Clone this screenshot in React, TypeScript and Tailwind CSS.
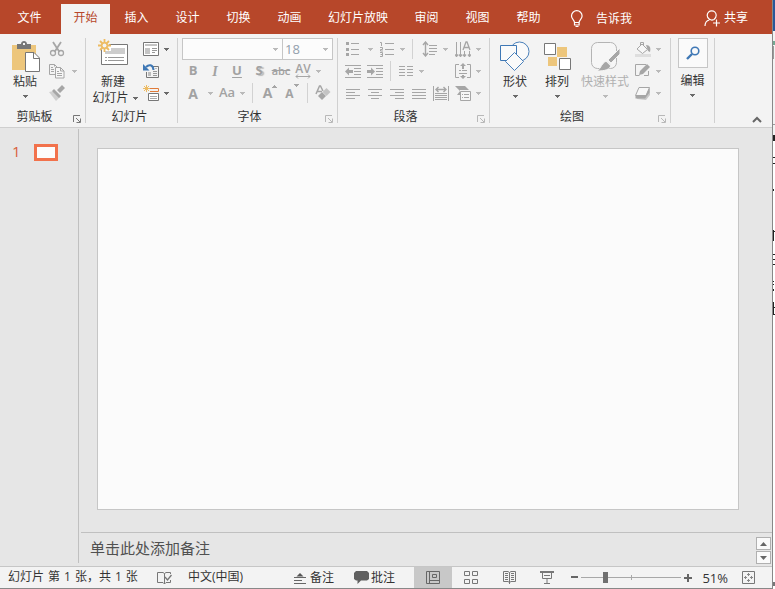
import type { ReactNode } from 'react';

const G = '#a6a6a6';
const D = '#777777';

type IconProps = { w?: number; h?: number; children: ReactNode };

const Icon = ({ w = 16, h = 16, children }: IconProps) => (
    <svg width={w} height={h} viewBox={`0 0 ${w} ${h}`} fill="none" className="block shrink-0" aria-hidden="true">
        {children}
    </svg>
);

// horizontal / vertical strokes, each path starts on a half pixel
const Lines = ({ d, c = G }: { d: string; c?: string }) => <path d={d} stroke={c} />;

const Arrow = ({ dark = false }: { dark?: boolean }) => (
    <svg width="5" height="3" viewBox="0 0 5 3" className="block shrink-0" aria-hidden="true">
        <path d="M0 0h5v1H4v1H3v1H2V2H1V1H0z" fill={dark ? '#6a6a6a' : '#bababa'} />
    </svg>
);

const Tool = ({ label, children }: { label: string; children: ReactNode }) => (
    <button type="button" aria-label={label} className="flex h-[22px] w-[22px] shrink-0 items-center justify-center text-[#a2a2a2]">
        {children}
    </button>
);

const More = ({ label, wide = false, dark = false }: { label: string; wide?: boolean; dark?: boolean }) => (
    <button type="button" aria-label={label} className={`flex h-[22px] shrink-0 items-center justify-center ${wide ? 'w-3' : 'w-2'}`}>
        <Arrow dark={dark} />
    </button>
);

const Sep = () => <span className="h-5 w-px shrink-0 bg-[#d2d2d2]" />;

const Row = ({ children }: { children: ReactNode }) => <div className="flex h-[22px] items-center">{children}</div>;

type GroupProps = { title: string; className: string; launcher?: 'dark' | 'light'; children: ReactNode };

const Group = ({ title, className, launcher, children }: GroupProps) => (
    <section aria-label={title} className={`flex h-[85px] shrink-0 flex-col border-r border-[#d0d0d0] ${className}`}>
        <div className="flex flex-1">{children}</div>
        <div className="flex h-4 items-end">
            <h2 className="flex-1 pr-1 text-center leading-3">{title}</h2>
            {launcher && (
                <button type="button" aria-label={`${title}设置`} className="mr-1 w-2">
                    <Icon w={8} h={8}>
                        <path d="M.5 7V.5H7M3 3l4 4M7.500 3.500v4h-4" stroke={launcher === 'dark' ? D : '#b8b8b8'} />
                    </Icon>
                </button>
            )}
        </div>
    </section>
);

type BigProps = { icon: ReactNode; label: string; className: string; off?: boolean };

const BigButton = ({ icon, label, className, off = false }: BigProps) => (
    <button type="button" className={`flex shrink-0 flex-col items-center ${off ? 'text-[#b0b0b0]' : ''} ${className}`}>
        <span className="flex h-9 items-center">{icon}</span>
        <span className="leading-4">{label}</span>
        <span className="pt-[5px]">
            <Arrow dark={!off} />
        </span>
    </button>
);

const tabs = ['插入', '设计', '切换', '动画', '幻灯片放映', '审阅', '视图', '帮助'];

const TabBar = () => (
    <header className="flex h-[34px] shrink-0 items-stretch bg-[#b7472a] pt-1 text-white">
        <nav className="flex gap-0.5" aria-label="功能区">
            <button type="button" className="w-[59px] pb-0.5">文件</button>
            <button type="button" className="w-[49px] bg-[#f3f3f3] pb-0.5 text-[#b7472a]" aria-current="page">开始</button>
            {tabs.map((t) => (
                <button type="button" key={t} className="min-w-[49px] px-3 pb-0.5">{t}</button>
            ))}
        </nav>
        <button type="button" className="ml-[17px] flex items-center gap-3">
            <Icon w={14} h={18}>
                <path d="M4.500 12.500c0-2.500-3-3.500-3-6.500a5.300 5.300 0 0 1 10.600 0c0 3-3 4-3 6.500zM4.500 12.500v2.500h4.600v-2.500M5.500 16.500h3" stroke="#fff" strokeWidth="1.200" />
            </Icon>
            告诉我
        </button>
        <button type="button" className="ml-auto mr-6 flex items-center gap-1 pb-0.5">
            <Icon w={16} h={17}>
                <path d="M1 16c0-3 1.500-5.300 4.300-6M10 9.500c-3 1.500-6.800-.5-6.800-4.200a4.500 4.500 0 0 1 9 0c0 2-.9 3.300-2.200 4.200M12.500 9.500v7M9 13h7" stroke="#fff" strokeWidth="1.200" />
            </Icon>
            共享
        </button>
    </header>
);

const Clipboard = () => (
    <Group title="剪贴板" launcher="dark" className="w-[86px]">
        <BigButton
            className="ml-1 w-[42px]"
            label="粘贴"
            icon={
                <Icon w={29} h={31}>
                    <path d="M1 4h24v25H1z" fill="#edc67c" />
                    <path d="M6 3h4c0-4 6-4 6 0h4v5H6z" fill={D} />
                    <path d="M12 2h2v2h-2z" fill="#f3f3f3" />
                    <path d="M14.500 11.500h8.500l5.500 5.500v13.500h-14z" fill="#fff" stroke={D} />
                    <path d="M22.500 11.500v6h6" stroke={D} />
                </Icon>
            }
        />
        <div className="flex flex-col">
            <Row>
                <Tool label="剪切">
                    <Icon>
                        <path d="M4 1l6.500 10M12 1L5.500 11" stroke={G} strokeWidth="1.800" />
                        <circle cx="4" cy="12" r="2.500" stroke={G} strokeWidth="1.300" />
                        <circle cx="12" cy="12" r="2.500" stroke={G} strokeWidth="1.300" />
                    </Icon>
                </Tool>
            </Row>
            <Row>
                <Tool label="复制">
                    <Icon>
                        <path d="M6 11.500H.5v-10h5l3 3M5.500 1.500v2M2 4.500h2M2 6.500h3M2 8.500h3" stroke={G} />
                        <path d="M6.500 4.500h5l3.500 3.500v7H6.500zM11.500 4.500V8H15M8 8.500h2M8 10.500h5M8 12.500h5" fill="#f7f7f7" stroke={G} />
                    </Icon>
                </Tool>
                <More label="复制选项" wide />
            </Row>
            <Row>
                <Tool label="格式刷">
                    <Icon>
                        <path d="M0 7l5-1 6 6-4 4z" fill="#d0d0d0" />
                        <path d="M5 4l7 7-2 2-7-7zM8 5l5-5 3 3-5 5z" fill={G} />
                    </Icon>
                </Tool>
            </Row>
        </div>
    </Group>
);

const Slides = () => (
    <Group title="幻灯片" className="w-[92px]">
        <button type="button" className="ml-1 flex w-[46px] shrink-0 flex-col items-center">
            <span className="flex h-9 items-center pb-2">
                <Icon w={32} h={29}>
                    <path d="M4.500 6.500h26v20h-26z" fill="#fff" stroke={D} />
                    <path d="M14 10h14v6H8v-3h6z" fill="#cdcdcd" />
                    <path d="M8 19.500h2M11 19.500h16M8 22.500h2M11 22.500h16" stroke="#999" />
                    <circle cx="7.500" cy="7.500" r="5" fill="#f3f3f3" />
                    <path d="M7.500 1v4M7.500 10v4M1 7.500h4M10 7.500h4M3 3l3 3M9 9l3 3M12 3L9 6M6 9l-3 3" stroke="#edbb62" strokeWidth="1.800" />
                    <circle cx="7.500" cy="7.500" r="2.800" stroke="#edbb62" strokeWidth="1.500" />
                </Icon>
            </span>
            <span className="leading-4">新建</span>
            <span className="flex items-center gap-1 pl-1 leading-4 whitespace-nowrap">
                幻灯片
                <Arrow dark />
            </span>
        </button>
        <div className="flex flex-col pl-1">
            <Row>
                <Tool label="版式">
                    <Icon>
                        <path d="M.5 1.500h15v13H.5z" fill="#fff" stroke={D} />
                        <path d="M2 3h12v2H2zM2 7h5v6H2z" fill="#c4c4c4" />
                        <path d="M9 7.500h5M9 9.500h5M9 11.500h3" stroke="#999" />
                    </Icon>
                </Tool>
                <More label="版式选项" dark />
            </Row>
            <Row>
                <Tool label="重置">
                    <Icon>
                        <path d="M10 3.500h5.500v11h-12V9" stroke={D} />
                        <path d="M5 9h3v4H5zM12 5h2v1h-2z" fill="#bdbdbd" />
                        <path d="M10 8.500h4M10 10.500h4M10 12.500h4" stroke="#999" />
                        <path d="M3 4c3-3 7-2.500 7.500 3" stroke="#3f78b5" strokeWidth="2" />
                        <path d="M0 1v6.500h6.500z" fill="#3f78b5" />
                    </Icon>
                </Tool>
            </Row>
            <Row>
                <Tool label="节">
                    <Icon>
                        <path d="M7 3.500h8.500v3H7" stroke="#e07b39" />
                        <path d="M5.500 8.500h10v7h-10z" fill="#fff" stroke={D} />
                        <path d="M7 11.500h7M7 13.500h7" stroke="#aaa" />
                        <path d="M3.500 0v7M0 3.500h7M1 1l5 5M6 1L1 6" stroke="#edbb62" />
                    </Icon>
                </Tool>
                <More label="节选项" dark />
            </Row>
        </div>
    </Group>
);

const FontGroup = () => (
    <Group title="字体" launcher="light" className="w-[160px]">
        <div className="ml-1 flex flex-col">
            <Row>
                <div className="grid h-[22px] w-[151px] grid-cols-[101px_50px]">
                    <label className="grid items-center border border-[#c6c6c6] bg-[#fcfcfc]">
                        <select aria-label="字体名称" className="col-start-1 row-start-1 h-full w-full appearance-none bg-transparent pl-1 outline-none">
                            <option></option>
                        </select>
                        <span className="pointer-events-none col-start-1 row-start-1 justify-self-end pr-1"><Arrow /></span>
                    </label>
                    <label className="grid items-center border border-l-0 border-[#c6c6c6] bg-[#fcfcfc]">
                        <select aria-label="字号" className="col-start-1 row-start-1 h-full w-full appearance-none bg-transparent pl-0.5 text-[13px] leading-5 text-[#93a0ad] outline-none">
                            <option>18</option>
                        </select>
                        <span className="pointer-events-none col-start-1 row-start-1 justify-self-end pr-1"><Arrow /></span>
                    </label>
                </div>
            </Row>
            <Row>
                <Tool label="加粗"><span className="text-[13px] font-bold">B</span></Tool>
                <Tool label="倾斜"><span className="font-['Liberation_Serif'] text-[14px] font-bold italic">I</span></Tool>
                <Tool label="下划线"><span className="text-[13px] font-bold underline underline-offset-2">U</span></Tool>
                <Tool label="文字阴影"><span className="text-[13px] font-bold [text-shadow:2px_1px_1px_#bbb]">S</span></Tool>
                <Tool label="删除线"><span className="text-[11px] font-semibold line-through">abc</span></Tool>
                <Tool label="字符间距">
                    <span className="flex flex-col items-center">
                        <span className="text-[12px] leading-[10px] font-semibold">AV</span>
                        <Icon w={16} h={5}><path d="M1 2.500h14M3 .5l-2 2 2 2M13 .5l2 2-2 2" stroke={G} /></Icon>
                    </span>
                </Tool>
                <More label="字符间距选项" />
            </Row>
            <Row>
                <Tool label="字体颜色"><span className="text-[14px] font-bold">A</span></Tool>
                <More label="颜色选项" wide />
                <Tool label="更改大小写"><span className="text-[13px] font-semibold">Aa</span></Tool>
                <More label="大小写选项" />
                <span className="flex px-1.5"><Sep /></span>
                <Tool label="增大字号">
                    <span className="flex">
                        <span className="text-[14px] leading-5 font-bold">A</span>
                        <Icon w={5} h={5}><path d="M2 2h1v1h1v1h1v1H0V4h1V3h1z" fill={G} /></Icon>
                    </span>
                </Tool>
                <Tool label="减小字号">
                    <span className="flex">
                        <span className="pt-0.5 text-[12px] leading-5 font-bold">A</span>
                        <Icon w={5} h={5}><path d="M0 2h5v1H4v1H3v1H2V4H1V3H0z" fill={G} /></Icon>
                    </span>
                </Tool>
                <span className="flex px-1"><Sep /></span>
                <Tool label="清除格式">
                    <Icon>
                        <path d="M1 9L4.500 1h1L8 6M2.500 6.500H7" stroke={G} strokeWidth="1.500" />
                        <path d="M3 11l4-4 4 4-4 4z" fill={G} />
                        <path d="M7.500 7l4-4 4 4-4 4z" fill="#c4c4c4" />
                    </Icon>
                </Tool>
            </Row>
        </div>
    </Group>
);

const Paragraph = () => (
    <Group title="段落" launcher="light" className="w-[152px]">
        <div className="ml-1 flex flex-col">
            <Row>
                <Tool label="项目符号">
                    <Icon>
                        <path d="M1 1h3v3H1zM1 7h3v3H1zM1 12h3v3H1z" fill={G} />
                        <Lines d="M6 2.500h8M6 8.500h8M6 13.500h8" />
                    </Icon>
                </Tool>
                <More label="项目符号选项" wide />
                <Tool label="编号">
                    <Icon>
                        <path d="M1 1.500h1.500V5M1 6.500h2.500v2H1.500v1.500H4M1 11.500h2.500v4H1M1.500 13.500h2" stroke={G} />
                        <Lines d="M6 2.500h9M6 8.500h9M6 13.500h9" />
                    </Icon>
                </Tool>
                <More label="编号选项" />
                <span className="flex px-1.5"><Sep /></span>
                <Tool label="行距">
                    <Icon>
                        <path d="M3.500 1v14M1 4l2.500-3L6 4M1 12l2.500 3L6 12" stroke={G} strokeWidth="1.400" />
                        <Lines d="M7 4.500h8M7 7.500h8M7 10.500h8M7 13.500h6" />
                    </Icon>
                </Tool>
                <More label="行距选项" />
                <span className="w-[3px]" />
                <Tool label="文字方向">
                    <Icon>
                        <Lines d="M1.500 1v15M5.500 1v15M9.500 10v6M14.500 10v6" />
                        <path d="M8 9l3-8h1l3 8M9 6.500h5M0 13.500l1.500 2 1.500-2M4 13.500l1.500 2 1.500-2M8 13.500l1.500 2 1.500-2M13 13.500l1.500 2 1.500-2" stroke={G} strokeWidth="1.300" />
                    </Icon>
                </Tool>
                <More label="文字方向选项" />
            </Row>
            <Row>
                <Tool label="减少缩进">
                    <Icon>
                        <Lines d="M0 2.500h16M9 5.500h7M9 8.500h7M9 11.500h7M0 14.500h16" />
                        <path d="M0 8.500l4-4V7h4v3H4v2.500z" fill={G} />
                    </Icon>
                </Tool>
                <Tool label="增加缩进">
                    <Icon>
                        <Lines d="M0 2.500h16M9 5.500h7M9 8.500h7M9 11.500h7M0 14.500h16" />
                        <path d="M8 8.500l-4-4V7H0v3h4v2.500z" fill={G} />
                    </Icon>
                </Tool>
                <span className="flex px-1"><Sep /></span>
                <Tool label="分栏">
                    <Icon>
                        <Lines d="M1 3.500h6M1 6.500h6M1 9.500h6M1 12.500h6M9 3.500h6M9 6.500h6M9 9.500h6M9 12.500h6" />
                    </Icon>
                </Tool>
                <More label="分栏选项" />
                <span className="w-[27px]" />
                <Tool label="对齐文本">
                    <Icon>
                        <Lines d="M4 1.500H.5v13H4M12 1.500h3.500v13H12M4 7.500h2M7 7.500h5M4 10.500h8" />
                        <path d="M8 0l3 3H9v3H7V3H5zM8 16l3-3H9v-1H7v1H5z" fill={G} />
                    </Icon>
                </Tool>
                <More label="对齐文本选项" />
            </Row>
            <Row>
                <Tool label="左对齐"><Icon><Lines d="M1 4.500h14M1 7.500h9M1 10.500h14M1 13.500h9" /></Icon></Tool>
                <Tool label="居中"><Icon><Lines d="M1 4.500h14M4 7.500h8M1 10.500h14M4 13.500h8" /></Icon></Tool>
                <Tool label="右对齐"><Icon><Lines d="M1 4.500h14M6 7.500h9M1 10.500h14M6 13.500h9" /></Icon></Tool>
                <Tool label="两端对齐"><Icon><Lines d="M1 4.500h14M1 7.500h14M1 10.500h14M1 13.500h14" /></Icon></Tool>
                <Tool label="分散对齐">
                    <Icon>
                        <Lines d="M.5 1v15M15.500 1v15M2 8.500h12M2 10.500h12M2 12.500h12M2 14.500h12" />
                        <path d="M3 4.500h10M5.500 2L3 4.500 5.500 7M10.500 2L13 4.500 10.500 7" stroke={G} strokeWidth="1.400" />
                    </Icon>
                </Tool>
                <Tool label="转换为 SmartArt">
                    <Icon>
                        <path d="M0 1h10l4 4H5v5H2l3-4z" fill={G} />
                        <path d="M5.500 6.500h10v9h-10z" fill="#f7f7f7" stroke={G} />
                        <Lines d="M7 9.500h1M9 9.500h5M7 12.500h1M9 12.500h5" />
                    </Icon>
                </Tool>
                <More label="SmartArt 选项" />
            </Row>
        </div>
    </Group>
);

const Drawing = () => (
    <Group title="绘图" launcher="light" className="w-[181px]">
        <BigButton
            className="ml-1 w-[42px]"
            label="形状"
            icon={
                <Icon w={30} h={30}>
                    <circle cx="19.500" cy="10.500" r="9.500" fill="#fafafa" stroke="#4a80ba" />
                    <path d="M.5 4.500h16v15H.5z" fill="#fafafa" stroke="#3f78b5" />
                    <path d="M14.500 11.500l9 9-9 9-9-9z" fill="#fafafa" stroke="#4a80ba" />
                </Icon>
            }
        />
        <BigButton
            className="w-[42px]"
            label="排列"
            icon={
                <Icon w={27} h={27}>
                    <path d="M13 4h10v10h-10v9H4V14h9z" fill="#edc67c" />
                    <path d="M.5.500h11v11H.5zM15.500 15.500h11v11h-11z" fill="#fff" stroke={D} />
                </Icon>
            }
        />
        <BigButton
            className="w-[54px]"
            label="快速样式"
            off
            icon={
                <Icon w={30} h={30}>
                    <rect x="1.500" y="1.500" width="25" height="26" rx="6" fill="#f6f6f6" stroke="#b4b4b4" />
                    <path d="M30 7v6l-9 9-3-3zM18 20l3 3c0 6-7 7-14 7 4-2 5-10 11-10z" fill={G} stroke="#f3f3f3" />
                    <path d="M16 19.500l5 5" stroke="#f3f3f3" strokeWidth="1.500" />
                </Icon>
            }
        />
        <div className="flex flex-col">
            <Row>
                <Tool label="形状填充">
                    <Icon>
                        <path d="M5.500 7V1.500h3V7" stroke={G} />
                        <path d="M2 8l5-5 5.500 5.500-5 4z" fill="#f7f7f7" stroke={G} />
                        <path d="M11 4c4 0 5 3 4 7l-2-1z" fill={G} />
                        <path d="M0 13h16v3H0z" fill="#dedede" />
                    </Icon>
                </Tool>
                <More label="填充选项" />
            </Row>
            <Row>
                <Tool label="形状轮廓">
                    <Icon>
                        <path d="M11 1.500H.5v11h4M13.500 8v4.500H9" stroke={G} />
                        <path d="M4 12l1-4 7-7 3 3-7 7z" fill={G} />
                    </Icon>
                </Tool>
                <More label="轮廓选项" />
            </Row>
            <Row>
                <Tool label="形状效果">
                    <Icon>
                        <path d="M4 5l11-1v6l-4 5-9-1z" fill="#c8c8c8" />
                        <path d="M4 2.500h10.500l-3.500 8H.5z" fill="#f7f7f7" stroke={G} strokeLinejoin="round" />
                        <path d="M.5 10.500v3H10l4.500-6v-5L11 10.500z" fill={G} />
                    </Icon>
                </Tool>
                <More label="效果选项" />
            </Row>
        </div>
    </Group>
);

const Editing = () => (
    <section aria-label="编辑" className="flex h-[85px] w-11 shrink-0 justify-center border-r border-[#d0d0d0]">
        <button type="button" className="flex flex-col items-center">
            <span className="flex h-[30px] w-[30px] items-center justify-center border border-[#c6c6c6] bg-[#fafafa]">
                <Icon w={14} h={14}>
                    <circle cx="9" cy="5" r="3.800" stroke="#3f78b5" strokeWidth="1.600" />
                    <path d="M6 8l-5 5" stroke="#3f78b5" strokeWidth="2.400" />
                </Icon>
            </span>
            <span className="pt-[5px] leading-4">编辑</span>
            <span className="pt-[5px]"><Arrow dark /></span>
        </button>
    </section>
);

const Ribbon = () => (
    <div className="flex h-[94px] shrink-0 border-b border-[#cfcfcf] bg-[#f3f3f3] pt-1">
        <Clipboard />
        <Slides />
        <FontGroup />
        <Paragraph />
        <Drawing />
        <Editing />
        <button type="button" aria-label="折叠功能区" className="mt-auto ml-auto mr-2.5 mb-1">
            <Icon w={10} h={7}><path d="M1 6l4-4 4 4" stroke="#666" strokeWidth="2" /></Icon>
        </button>
    </div>
);

const ScrollButton = ({ label, d }: { label: string; d: string }) => (
    <button type="button" aria-label={label} className="flex h-[13px] w-[15px] items-center justify-center border border-[#b0b0b0] bg-[#fafafa]">
        <Icon w={7} h={4}><path d={d} fill="#666" /></Icon>
    </button>
);

const Workspace = () => (
    <main className="flex min-h-0 flex-1 bg-[#e6e6e6] pt-px">
        <aside className="mb-[3px] flex w-[79px] shrink-0 gap-3 border-r border-[#c0c0c0] pt-[15px] pl-3">
            <span className="w-2.5 text-[15px] leading-[15px] font-medium text-[#d9603c]">1</span>
            <button type="button" aria-label="幻灯片 1" className="h-[17px] w-6 border-3 border-[#f2724c] bg-[#fcfcfc]" />
        </aside>
        <div className="flex min-w-0 flex-1 flex-col">
            <div className="flex flex-1 pt-[19px] pr-[33px] pb-[22px] pl-[18px]">
                <div className="flex-1 border border-[#c6c6c6] bg-[#fbfbfb]" />
            </div>
            <div className="ml-0.5 flex h-[34px] border-t border-[#c0c0c0]">
                <p className="flex-1 pl-[9px] text-[15px] leading-[30px] text-[#505050]">单击此处添加备注</p>
                <div className="flex flex-col gap-px pt-1 pr-px">
                    <ScrollButton label="上一张" d="M0 4h7L3.500 0z" />
                    <ScrollButton label="下一张" d="M0 0h7L3.500 4z" />
                </div>
            </div>
        </div>
    </main>
);

const ViewButton = ({ label, on = false, children }: { label: string; on?: boolean; children: ReactNode }) => (
    <button type="button" aria-label={label} className={`flex w-[38px] items-center justify-center ${on ? 'bg-[#c8c8c8]' : ''}`}>
        {children}
    </button>
);

const StatusBar = () => (
    <footer className="flex h-[22px] shrink-0 items-stretch border-t border-[#c6c6c6] bg-[#f3f3f3] leading-5">
        <span className="flex w-[148px] gap-1 pl-2 whitespace-nowrap">
            <span>幻灯片</span>
            <span>第</span>
            <span>1</span>
            <span>张，共</span>
            <span>1</span>
            <span>张</span>
        </span>
        <button type="button" aria-label="拼写检查" className="flex w-8 items-center justify-center">
            <Icon w={15} h={14}>
                <path d="M7.500 13V2.500L6 1.500H.5v10H6L7.500 13l1.500-1.500h4.500V9M7.500 2.500l1.500-1h4.500V3" stroke={D} />
                <path d="M8 6l2.500 3L14.500 4" stroke={D} strokeWidth="1.300" />
            </Icon>
        </button>
        <button type="button" className="flex pl-2">中文(中国)</button>
        <div className="ml-auto flex">
            <button type="button" className="flex items-center gap-1 pr-5">
                <Icon w={12} h={12}>
                    <path d="M2.500 4.500L6 1l3.500 3.500z" fill="#555" />
                    <path d="M0 5.500h12M0 8.500h8M0 11.500h12" stroke="#666" />
                </Icon>
                备注
            </button>
            <button type="button" className="flex items-center gap-0.5 pr-[19px]">
                <Icon w={15} h={13}>
                    <path d="M2 0h11l2 2v6l-2 1.500H7L3.500 13V9.500H2L0 8V2z" fill="#606060" />
                </Icon>
                批注
            </button>
            <ViewButton label="普通视图" on>
                <Icon w={14} h={13}>
                    <path d="M.5.500h13v12H.5zM3.500 1v12M4 9.500h9M6.500 3.500h4v3h-4z" stroke="#666" />
                </Icon>
            </ViewButton>
            <ViewButton label="幻灯片浏览">
                <Icon w={14} h={13}>
                    <path d="M.5.500h5v4h-5zM8.500.500h5v4h-5zM.5 8.500h5v4h-5zM8.500 8.500h5v4h-5z" stroke={D} />
                </Icon>
            </ViewButton>
            <ViewButton label="阅读视图">
                <Icon w={13} h={13}>
                    <path d="M6.500 13V1.500L5 .5H.5v10H5l1.500 1 1.500-1h4.500V.5H8l-1.500 1M2 2.500h3M2 4.500h3M2 6.500h3M2 8.500h3M8 2.500h3M8 4.500h3M8 6.500h3M8 8.500h3" stroke={D} />
                </Icon>
            </ViewButton>
            <ViewButton label="幻灯片放映">
                <Icon w={14} h={13}>
                    <path d="M0 1h14" stroke={D} strokeWidth="2" />
                    <path d="M2.500 2v5.500h9V2M4 4.500h6M7 8v4M4 12.500h6" stroke={D} />
                </Icon>
            </ViewButton>
            <button type="button" aria-label="缩小" className="flex items-center pl-[5px]">
                <Icon w={7} h={3}><path d="M0 0h7v2H0z" fill="#666" /></Icon>
            </button>
            <div className="grid w-[106px] items-center px-[3px]">
                <span className="col-start-1 row-start-1 h-[5px] w-px justify-self-center bg-[#a8a8a8]" />
                <input
                    type="range"
                    aria-label="显示比例"
                    min={0}
                    max={100}
                    defaultValue={23}
                    className="col-start-1 row-start-1 h-3 w-full appearance-none bg-transparent [&::-webkit-slider-runnable-track]:h-px [&::-webkit-slider-runnable-track]:bg-[#a8a8a8] [&::-webkit-slider-thumb]:-mt-[5px] [&::-webkit-slider-thumb]:h-[11px] [&::-webkit-slider-thumb]:w-[5px] [&::-webkit-slider-thumb]:appearance-none [&::-webkit-slider-thumb]:bg-[#707070]"
                />
            </div>
            <button type="button" aria-label="放大" className="flex items-center">
                <Icon w={8} h={8}><path d="M0 4h8M4 0v8" stroke="#666" strokeWidth="2" /></Icon>
            </button>
            <button type="button" className="w-[50px] pr-1 text-right text-[13px]"><span className="pr-2.5">51%</span></button>
            <button type="button" aria-label="适应窗口" className="mr-[17px] flex items-center">
                <Icon w={13} h={13}>
                    <path d="M.5.500h12v12H.5z" stroke={D} />
                    <path d="M6.500 2v3M6.500 8v3M2 6.500h3M8 6.500h3M5 3.500h3M5 9.500h3M3.500 5v3M9.500 5v3" stroke="#888" />
                </Icon>
            </button>
        </div>
    </footer>
);

// sliver of the document window that sits behind
const BackWindow = () => (
    <svg width="2" height="589" className="block shrink-0 bg-white" aria-hidden="true">
        <path d="M0 0h2v31H0z" fill="#2b579a" />
        <path d="M0 31h2v107H0z" fill="#f3f3f3" />
        <path d="M0 41h2v4H0z" fill="#74a892" />
        <path d="M0 46h1v13H0zM0 124h2v1H0z" fill="#9a9a9a" />
        <path d="M0 135h2v6H0zM0 157h2v1H0zM0 163h2v1H0zM0 189h1v2H0zM0 230h1v11H0zM1 231h1v1H1zM0 254h2v1H0zM0 259h2v1H0zM0 264h2v1H0zM0 281h1v1H0zM0 284h1v1H0zM0 289h1v2H0zM0 302h1v13H0zM1 307h1v1H1zM1 314h1v1H1z" fill="#222" />
        <path d="M0 582h2v4H0z" fill="#777" />
    </svg>
);

export default function App() {
    return (
        <div className="flex h-screen overflow-hidden bg-white font-['Open_Sans','Noto_Sans_CJK_SC',sans-serif] text-[12px] text-[#333]">
            <div className="flex min-w-0 flex-1 flex-col border-r border-b border-[#888]">
                <TabBar />
                <Ribbon />
                <Workspace />
                <StatusBar />
            </div>
            <BackWindow />
        </div>
    );
}
